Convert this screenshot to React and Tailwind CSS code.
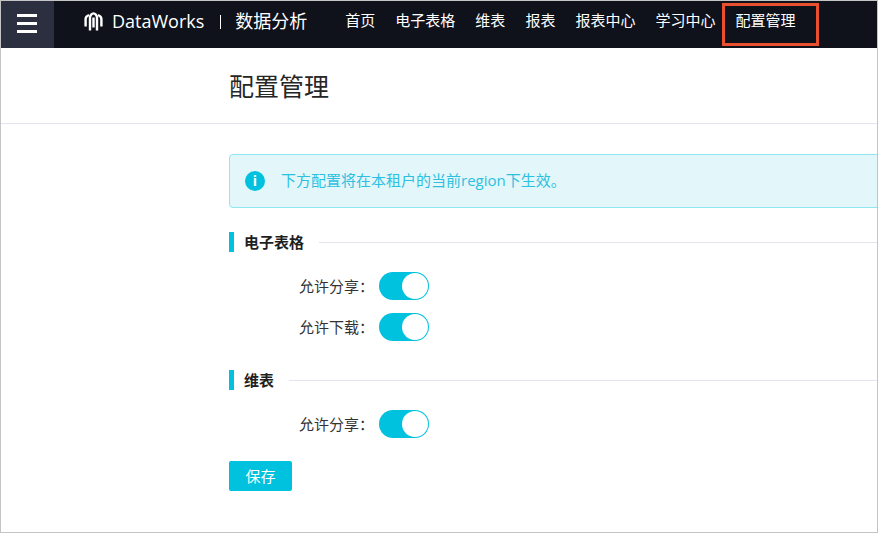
const navItems = ["首页", "电子表格", "维表", "报表", "报表中心", "学习中心", "配置管理"];

const cjk = "font-['Open_Sans','Noto_Sans_CJK_SC',sans-serif]";

function Logo() {
  return (
    <svg width="19" height="20" viewBox="0 0 19 20" fill="none" stroke="white" strokeWidth="2.4">
      <path d="M1.6 14.5V7C1.6 5 3.4 3.6 5 3" />
      <path d="M6 18.5V5.5C6 3.2 8 1.4 9.5 1.4C11 1.4 13 3.2 13 5.5V18.5" />
      <path d="M9.5 5.5V15.5" />
      <path d="M17.4 14.5V7C17.4 5 15.6 3.6 14 3" />
    </svg>
  );
}

function MenuIcon() {
  return (
    <svg width="20" height="19" viewBox="0 0 20 19" fill="white">
      <rect y="0" width="20" height="3" />
      <rect y="8" width="20" height="3" />
      <rect y="16" width="20" height="3" />
    </svg>
  );
}

function Toggle() {
  return (
    <div className="flex h-[28px] w-[50px] items-center justify-end rounded-full bg-[#00c1de] pr-px">
      <div className="h-[26px] w-[26px] rounded-full bg-white" />
    </div>
  );
}

function SettingRow({ label }) {
  return (
    <div className="flex h-[28px] items-center">
      <span className="w-[150px] pr-[5px] pt-[1px] text-right text-[15px] leading-none text-[#333]">{label}：</span>
      <Toggle />
    </div>
  );
}

function SectionTitle({ title }) {
  return (
    <div className="flex h-[20px] items-center border-l-[5px] border-[#00c1de] pl-[10px]">
      <span className="text-[15px] font-bold text-[#1f1f1f]">{title}</span>
      <div className="ml-[15px] h-px flex-1 bg-[#e3e4ec]" />
    </div>
  );
}

export default function App() {
  return (
    <div className={`h-[533px] w-[878px] overflow-hidden border border-[#c4c4c4] bg-white ${cjk}`}>
      <header className="relative flex h-[47px] items-center bg-[#0f121b] text-white">
        <div className="flex h-full w-[53px] items-center justify-center bg-[#2c2f3f] pb-[2px] pr-px">
          <MenuIcon />
        </div>
        <div className="ml-[30px] flex items-center pb-[6px]">
          <Logo />
          <span className="ml-[9px] text-[18px]">DataWorks</span>
          <div className="ml-[16px] h-[14px] w-px bg-white" />
          <span className="ml-[14px] text-[18px]">数据分析</span>
        </div>
        <nav className="ml-[38px] flex items-center gap-5 pb-2 text-[15px]">
          {navItems.map((item) => (
            <span key={item}>{item}</span>
          ))}
        </nav>
        <div className="absolute left-[721px] top-[2px] h-[43px] w-[97px] border-[3px] border-[#e8502f]" />
      </header>

      <div className="flex h-[76px] items-center border-b border-[#e3e4ec] pl-[228px] pt-[2px]">
        <h1 className="text-[25px] font-normal text-[#262626]">配置管理</h1>
      </div>

      <main className="w-[1100px] pb-6 pl-[228px] pt-[30px]">
        <div className="flex h-[54px] items-center rounded-[4px] border border-[#8fe6f2] bg-[#e3f7fb] pl-[15px]">
          <span className="flex h-5 w-5 items-center justify-center rounded-full bg-[#00c1de] text-[14px] font-bold leading-none text-white">i</span>
          <span className="ml-4 pb-[1px] text-[15px] text-[#2cc0e0]">下方配置将在本租户的当前region下生效。</span>
        </div>

        <div className="mt-[24px]">
          <SectionTitle title="电子表格" />
          <div className="mt-[20px] flex flex-col gap-[13px]">
            <SettingRow label="允许分享" />
            <SettingRow label="允许下载" />
          </div>
        </div>

        <div className="mt-[29px]">
          <SectionTitle title="维表" />
          <div className="mt-[20px]">
            <SettingRow label="允许分享" />
          </div>
        </div>

        <button className="mt-[23px] h-[30px] w-[63px] rounded-[2px] bg-[#00c1de] text-[15px] text-white">保存</button>
      </main>
    </div>
  );
}
